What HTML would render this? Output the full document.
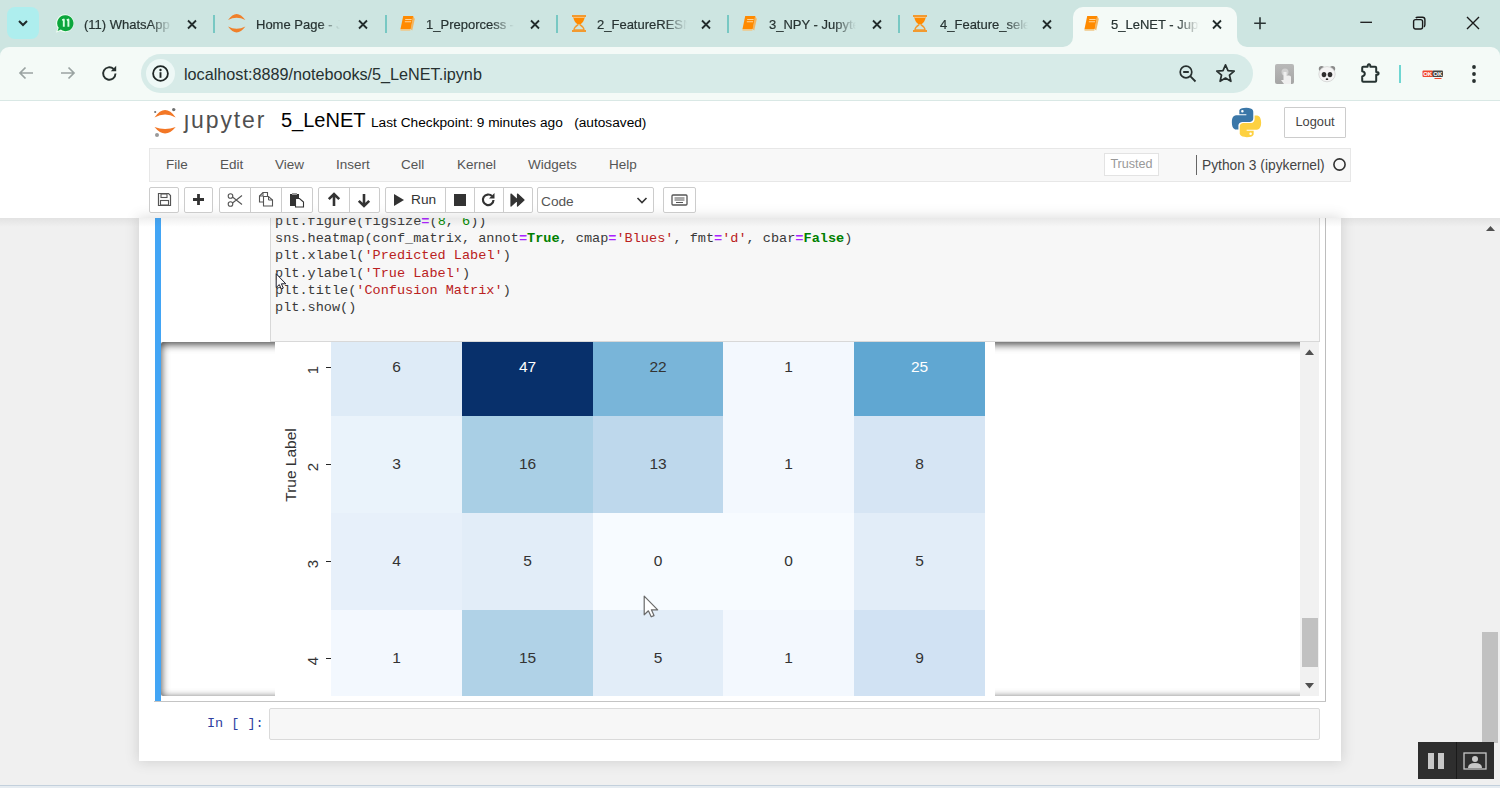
<!DOCTYPE html>
<html><head><meta charset="utf-8">
<style>
*{box-sizing:border-box;margin:0;padding:0}
html,body{width:1500px;height:788px;overflow:hidden;background:#f0f0f0;font-family:"Liberation Sans",sans-serif}
.a{position:absolute}
/* tab strip */
#tabs{left:0;top:0;width:1500px;height:60px;background:#cde5e1}
.tt{font-size:13px;color:#273332;-webkit-text-stroke:0.2px #273332;white-space:nowrap;overflow:hidden;top:16px;height:20px;line-height:18px}
.fade{-webkit-mask-image:linear-gradient(to right,#000 75%,transparent)}
.sep{width:2px;height:18px;top:15px;background:#78c8c3}
.cx{top:17px;width:12px;height:12px}
#toolbar{left:0;top:47px;width:1500px;height:54px;background:#f4faf7;border-bottom:1px solid #d9e8e5;border-radius:9px 9px 0 0}
#omni{left:141px;top:54px;width:1112px;height:39px;border-radius:20px;background:#d7ebe8}
/* jupyter */
#jhead{left:0;top:101px;width:1500px;height:117px;background:#fff}
#menubar{left:149px;top:148px;width:1202px;height:34px;background:#f8f8f8;border:1px solid #e7e7e7;border-radius:0}
.mi{top:156px;font-size:13.5px;color:#555;line-height:17px}
.btn{top:187px;height:26px;background:#fff;border:1px solid #ccc;border-radius:2px}
.bsep{top:187px;width:1px;height:26px;background:#ccc}
#page{left:0;top:218px;width:1500px;height:570px;background:#f0f0f0}
#container{left:139px;top:218px;width:1202px;height:543px;background:#fff;box-shadow:0 0 12px 1px rgba(87,87,87,.2)}
.code{font-family:"Liberation Mono",monospace;font-size:13.55px;line-height:17.35px;color:#3a3a3a;white-space:pre}
.kw{color:#008000;font-weight:bold}
.st{color:#ba2121}
.op{color:#aa22ff;font-weight:bold}
.ytick{width:20px;height:16px;line-height:16px;text-align:center;font-size:15px;color:#333;transform:rotate(-90deg)}
.cell{padding-top:1px;text-align:center;font-family:"Liberation Sans",sans-serif;font-size:15.5px;}
</style></head>
<body>
<div id="tabs" class="a"></div>

<!-- tab search -->
<div class="a" style="left:7px;top:7px;width:32px;height:32px;border-radius:8px;background:#aeeeee"></div>
<svg class="a" style="left:17px;top:18px" width="12" height="10" viewBox="0 0 12 10"><path d="M2 3 L6 7 L10 3" fill="none" stroke="#1f2a2a" stroke-width="2"/></svg>
<!-- tab1 whatsapp -->
<svg class="a" style="left:54px;top:12px" width="22" height="22" viewBox="0 0 22 22"><path d="M11.75 2.3 A8.95 8.95 0 1 1 6.4 18.9 L1.8 20.8 L3.6 16.2 A8.95 8.95 0 0 1 11.75 2.3Z" fill="#eefcf0"/><path d="M11.75 3.35 A7.9 7.9 0 1 1 6.9 17.6 L3.6 18.9 L4.7 15.8 A7.9 7.9 0 0 1 11.75 3.35Z" fill="#0ba63c"/><path d="M8.2 8.2 L9.8 7.6 V14.8 M12.8 8.2 L14.4 7.6 V14.8" fill="none" stroke="#d6ffe0" stroke-width="1.9" stroke-linejoin="round"/></svg>
<div class="a tt fade" style="left:84px;width:88px">(11) WhatsApp</div>
<div class="a sep" style="left:213px"></div>
<!-- tab2 home -->
<svg class="a" style="left:226px;top:12px" width="22" height="22" viewBox="0 0 22 22"><path d="M2 8 Q10.6 -4.2 19.4 8 Q10.6 3.6 2 8Z" fill="#f0802a"/><path d="M2 14.5 Q10.6 26.3 19.4 14.5 Q10.6 18.9 2 14.5Z" fill="#f0802a"/></svg>
<div class="a tt fade" style="left:256px;width:84px">Home Page - Jupyter</div>
<div class="a sep" style="left:385px"></div>
<div class="a tt fade" style="left:426px;width:88px">1_Preporcess - Jupyter</div>
<div class="a sep" style="left:556px"></div>
<div class="a tt fade" style="left:597px;width:90px">2_FeatureRESNET</div>
<div class="a sep" style="left:727px"></div>
<div class="a tt fade" style="left:769px;width:87px">3_NPY - Jupyter</div>
<div class="a sep" style="left:898px"></div>
<div class="a tt fade" style="left:940px;width:88px">4_Feature_selection</div>
<!-- active tab -->
<div class="a" style="left:1073px;top:7px;width:164px;height:40px;background:#f4faf7;border-radius:10px 10px 0 0"></div>
<svg class="a" style="left:1063px;top:37px" width="10" height="10"><path d="M0 10 A10 10 0 0 0 10 0 L10 10Z" fill="#f4faf7"/></svg>
<svg class="a" style="left:1237px;top:37px" width="10" height="10"><path d="M10 10 A10 10 0 0 1 0 0 L0 10Z" fill="#f4faf7"/></svg>
<div class="a tt fade" style="left:1111px;width:88px">5_LeNET - Jupyter</div>
<svg class="a" style="left:399px;top:15px" width="17" height="17" viewBox="0 0 17 17"><path d="M14.2 1 L15.8 4 L13.2 15.5 L11.7 14Z" fill="#f5b560"/><path d="M4.2 1 H14.2 L11.7 14 H1.5Z" fill="#ff8a00"/><path d="M1.5 14 H11.7 L11.3 15.8 H2 Q0.8 15.8 1.5 14Z" fill="#f0c888"/><path d="M6.2 4.5 H12.6 M5.8 6.7 H12.1" stroke="#ffd59a" stroke-width="1.1"/></svg><svg class="a" style="left:572px;top:15px" width="14" height="17" viewBox="0 0 14 17"><rect x="0" y="0" width="14" height="2" fill="#f29a30"/><rect x="0" y="15" width="14" height="2" fill="#f29a30"/><path d="M1.3 2 H12.7 Q12.3 6.5 8.2 9.6 H5.8 Q1.7 6.5 1.3 2Z" fill="#ff8a00"/><path d="M1.3 2 H12.7 V3 H1.3Z" fill="#ffc070"/><path d="M6.2 9.6 Q2.3 12 2 15 H12 Q11.7 12 7.8 9.6" fill="none" stroke="#f29a30" stroke-width="1.5"/></svg><svg class="a" style="left:741px;top:15px" width="17" height="17" viewBox="0 0 17 17"><path d="M14.2 1 L15.8 4 L13.2 15.5 L11.7 14Z" fill="#f5b560"/><path d="M4.2 1 H14.2 L11.7 14 H1.5Z" fill="#ff8a00"/><path d="M1.5 14 H11.7 L11.3 15.8 H2 Q0.8 15.8 1.5 14Z" fill="#f0c888"/><path d="M6.2 4.5 H12.6 M5.8 6.7 H12.1" stroke="#ffd59a" stroke-width="1.1"/></svg><svg class="a" style="left:913px;top:15px" width="14" height="17" viewBox="0 0 14 17"><rect x="0" y="0" width="14" height="2" fill="#f29a30"/><rect x="0" y="15" width="14" height="2" fill="#f29a30"/><path d="M1.3 2 H12.7 Q12.3 6.5 8.2 9.6 H5.8 Q1.7 6.5 1.3 2Z" fill="#ff8a00"/><path d="M1.3 2 H12.7 V3 H1.3Z" fill="#ffc070"/><path d="M6.2 9.6 Q2.3 12 2 15 H12 Q11.7 12 7.8 9.6" fill="none" stroke="#f29a30" stroke-width="1.5"/></svg><svg class="a" style="left:1083px;top:15px" width="17" height="17" viewBox="0 0 17 17"><path d="M14.2 1 L15.8 4 L13.2 15.5 L11.7 14Z" fill="#f5b560"/><path d="M4.2 1 H14.2 L11.7 14 H1.5Z" fill="#ff8a00"/><path d="M1.5 14 H11.7 L11.3 15.8 H2 Q0.8 15.8 1.5 14Z" fill="#f0c888"/><path d="M6.2 4.5 H12.6 M5.8 6.7 H12.1" stroke="#ffd59a" stroke-width="1.1"/></svg><svg class="a cx" style="left:186px;top:18px" width="12" height="12" viewBox="0 0 12 12"><path d="M2 2.5 L10 10.5 M10 2.5 L2 10.5" stroke="#222c2c" stroke-width="1.8"/></svg><svg class="a cx" style="left:357px;top:18px" width="12" height="12" viewBox="0 0 12 12"><path d="M2 2.5 L10 10.5 M10 2.5 L2 10.5" stroke="#222c2c" stroke-width="1.8"/></svg><svg class="a cx" style="left:529px;top:18px" width="12" height="12" viewBox="0 0 12 12"><path d="M2 2.5 L10 10.5 M10 2.5 L2 10.5" stroke="#222c2c" stroke-width="1.8"/></svg><svg class="a cx" style="left:700px;top:18px" width="12" height="12" viewBox="0 0 12 12"><path d="M2 2.5 L10 10.5 M10 2.5 L2 10.5" stroke="#222c2c" stroke-width="1.8"/></svg><svg class="a cx" style="left:871px;top:18px" width="12" height="12" viewBox="0 0 12 12"><path d="M2 2.5 L10 10.5 M10 2.5 L2 10.5" stroke="#222c2c" stroke-width="1.8"/></svg><svg class="a cx" style="left:1041px;top:18px" width="12" height="12" viewBox="0 0 12 12"><path d="M2 2.5 L10 10.5 M10 2.5 L2 10.5" stroke="#222c2c" stroke-width="1.8"/></svg><svg class="a cx" style="left:1211px;top:18px" width="12" height="12" viewBox="0 0 12 12"><path d="M2 2.5 L10 10.5 M10 2.5 L2 10.5" stroke="#222c2c" stroke-width="1.8"/></svg>
<svg class="a" style="left:1253px;top:16px" width="14" height="14" viewBox="0 0 14 14"><path d="M7 1.3 V13.3 M1.2 7.3 H12.8" stroke="#2a3434" stroke-width="1.6"/></svg>
<svg class="a" style="left:1360px;top:20px" width="13" height="5" viewBox="0 0 13 5"><path d="M0.3 2.3 H12" stroke="#1a1a1a" stroke-width="1.3"/></svg>
<svg class="a" style="left:1412px;top:16px" width="15" height="15" viewBox="0 0 15 15"><rect x="1.6" y="3.6" width="9" height="9.4" rx="2" fill="none" stroke="#1a1a1a" stroke-width="1.4"/><path d="M3.8 2 Q4.3 1.3 5.8 1.3 H10.5 Q12.9 1.3 12.9 3.7 V8.6 Q12.9 10.4 12 10.9" fill="none" stroke="#1a1a1a" stroke-width="1.4"/></svg>
<svg class="a" style="left:1466px;top:16px" width="14" height="14" viewBox="0 0 14 14"><path d="M1 1 L13 13 M13 1 L1 13" stroke="#1a1a1a" stroke-width="1.4"/></svg>
<div id="toolbar" class="a"></div>
<div id="omni" class="a"></div>

<svg class="a" style="left:17px;top:64px" width="18" height="18" viewBox="0 0 18 18"><path d="M16 9 H3 M8.5 3.5 L3 9 L8.5 14.5" fill="none" stroke="#9aa3a2" stroke-width="1.7"/></svg>
<svg class="a" style="left:59px;top:64px" width="18" height="18" viewBox="0 0 18 18"><path d="M2 9 H15 M9.5 3.5 L15 9 L9.5 14.5" fill="none" stroke="#9aa3a2" stroke-width="1.7"/></svg>
<svg class="a" style="left:100px;top:64px" width="19" height="19" viewBox="0 0 19 19"><path d="M15.5 9.5 A6.2 6.2 0 1 1 13.6 5" fill="none" stroke="#27302f" stroke-width="1.9"/><path d="M16.2 1.8 V7.2 H10.8Z" fill="#27302f"/></svg>
<div class="a" style="left:146px;top:59px;width:29px;height:29px;border-radius:50%;background:#eef8f6"></div>
<svg class="a" style="left:151px;top:64px" width="19" height="19" viewBox="0 0 19 19"><circle cx="9.5" cy="9.5" r="7.4" fill="none" stroke="#1f2625" stroke-width="1.8"/><circle cx="9.5" cy="6" r="1.2" fill="#1f2625"/><path d="M9.5 8.2 V13.8" stroke="#1f2625" stroke-width="1.9"/></svg>
<div class="a" style="left:184px;top:63.5px;font-size:16.2px;line-height:20px;color:#263130;white-space:nowrap">localhost:8889/notebooks/5_LeNET.ipynb</div>
<svg class="a" style="left:1178px;top:64px" width="20" height="20" viewBox="0 0 20 20"><circle cx="8" cy="8" r="5.8" fill="none" stroke="#27302f" stroke-width="1.7"/><path d="M5.2 8 H10.8 M12.2 12.2 L17.5 17.5" stroke="#27302f" stroke-width="1.8"/></svg>
<svg class="a" style="left:1215px;top:63px" width="21" height="20" viewBox="0 0 21 20"><path d="M10.5 1.8 L13 7.6 L19.2 8.1 L14.5 12.2 L15.9 18.3 L10.5 15.1 L5.1 18.3 L6.5 12.2 L1.8 8.1 L8 7.6Z" fill="none" stroke="#27302f" stroke-width="1.7" stroke-linejoin="round"/></svg>
<div class="a" style="left:1275px;top:64px;width:19px;height:20px;border-radius:2px;background:linear-gradient(#b9b9b9,#a5a5a5)"></div>
<svg class="a" style="left:1277px;top:66px" width="16" height="18" viewBox="0 0 16 18"><circle cx="8" cy="6" r="3.5" fill="#d0d0d0"/><path d="M6.5 6 V14 H4 L7 18 H14 V11 Q14 9.5 12 9.5 H9.5 V6Z" fill="#efefef"/></svg>
<svg class="a" style="left:1317px;top:64px" width="20" height="19" viewBox="0 0 20 19"><circle cx="4.6" cy="4.8" r="2.8" fill="#8a8a8a"/><circle cx="15.4" cy="4.8" r="2.8" fill="#8a8a8a"/><ellipse cx="10" cy="10.2" rx="8.2" ry="7.6" fill="#f4f4f4" stroke="#c8c8c8" stroke-width=".6"/><ellipse cx="7" cy="10.6" rx="2.3" ry="2.7" fill="#2e2e2e"/><ellipse cx="13" cy="10.6" rx="2.3" ry="2.7" fill="#2e2e2e"/><ellipse cx="10" cy="15.2" rx="1.3" ry=".9" fill="#2e2e2e"/></svg>
<svg class="a" style="left:1359px;top:61px" width="24" height="24" viewBox="0 0 24 24"><path d="M4.5 5.8 H8.6 Q8.6 3.2 10 3.2 Q11.4 3.2 11.4 5.8 H16.2 Q17.2 5.8 17.2 6.8 V11 Q19.6 11 19.6 12.4 Q19.6 13.8 17.2 13.8 V19.8 Q17.2 20.8 16.2 20.8 H4.2 Q3.2 20.8 3.2 19.8 V15.5 Q5.8 14.8 5.8 12.8 Q5.8 10.8 3.2 10.2 V6.8 Q3.2 5.8 4.2 5.8Z" fill="none" stroke="#263332" stroke-width="2" stroke-linejoin="round"/></svg>
<div class="a" style="left:1399px;top:65px;width:2px;height:18px;background:#6fd6d2"></div>
<svg class="a" style="left:1421px;top:68px" width="24" height="12" viewBox="0 0 24 12"><rect x="1.5" y="2.5" width="10.5" height="6.5" rx="1" fill="#f0482e"/><rect x="11.5" y="2.5" width="10.5" height="6.5" rx="1" fill="#454545"/><text x="6.7" y="8.2" font-family="Liberation Sans" font-weight="bold" font-size="6" fill="#fff" text-anchor="middle">OK</text><text x="16.8" y="8.2" font-family="Liberation Sans" font-weight="bold" font-size="6" fill="#fff" text-anchor="middle">OK</text><rect x="13.5" y="10" width="7" height="1" fill="#f0482e"/></svg>
<svg class="a" style="left:1470px;top:64px" width="8" height="20" viewBox="0 0 8 20"><circle cx="4" cy="3" r="1.9" fill="#27302f"/><circle cx="4" cy="10" r="1.9" fill="#27302f"/><circle cx="4" cy="17" r="1.9" fill="#27302f"/></svg>
<div id="jhead" class="a"></div>

<!-- jupyter logo -->
<svg class="a" style="left:152px;top:106px" width="28" height="33" viewBox="0 0 28 33"><path d="M2.5 11.4 Q13.1 -3.4 23.7 11.4 Q13.1 5.4 2.5 11.4Z" fill="#f37726"/><path d="M2.5 21 Q13.1 34 23.7 21 Q13.1 25.2 2.5 21Z" fill="#f37726"/><circle cx="21.7" cy="3.6" r="1.7" fill="#6f6f6f"/><circle cx="3.2" cy="6" r="1.1" fill="#6f6f6f"/><circle cx="5" cy="29" r="2" fill="#9a9a9a"/></svg>
<div class="a" style="left:184px;top:107px;font-size:23px;line-height:26px;color:#505050;letter-spacing:1.9px">&#x0237;upyter</div>
<div class="a" style="left:281px;top:108px;font-size:20px;line-height:24px;color:#000">5_LeNET</div>
<div class="a" style="left:371px;top:115px;font-size:13.7px;line-height:16px;color:#000;white-space:pre">Last Checkpoint: 9 minutes ago   (autosaved)</div>
<svg class="a" style="left:1231px;top:107px" width="31" height="31" viewBox="0 0 110 110"><path d="M54 3C28 3 29.6 14.3 29.6 14.3V26H54.5V29.5H19.7S3 27.6 3 54.1 17.6 80 17.6 80H26.3V67.6S25.8 53 40.6 53H65.2S79 53.2 79 39.7V17.3S81.1 3 54 3ZM40.4 10.8A4.5 4.5 0 1 1 40.4 19.8 4.5 4.5 0 1 1 40.4 10.8Z" fill="#3b77a8"/><path d="M56 107C82 107 80.4 95.7 80.4 95.7V84H55.5V80.5H90.3S107 82.4 107 55.9 92.4 30 92.4 30H83.7V42.4S84.2 57 69.4 57H44.8S31 56.8 31 70.3V92.7S28.9 107 56 107ZM69.6 99.2A4.5 4.5 0 1 1 69.6 90.2 4.5 4.5 0 1 1 69.6 99.2Z" fill="#fdd141"/></svg>
<div class="a" style="left:1284px;top:107px;width:62px;height:31px;border:1px solid #ccc;border-radius:1px;background:#fff;font-size:12.8px;line-height:28px;text-align:center;color:#444">Logout</div>
<div id="page" class="a"></div>
<div id="container" class="a"></div>
<div class="a" style="left:154.5px;top:218px;width:6.5px;height:484px;background:#42a5f5"></div>
<div class="a" style="left:270px;top:218px;width:1050px;height:124px;background:#f7f7f7;border:1px solid #d8d8d8;border-top:none"></div>
<div class="a code" style="left:275px;top:212.5px;clip-path:inset(5.5px 0 0 0)">plt.figure(figsize<span class="op">=</span>(<span style="color:#080">8</span>, <span style="color:#080">6</span>))
sns.heatmap(conf_matrix, annot<span class="op">=</span><span class="kw">True</span>, cmap<span class="op">=</span><span class="st">'Blues'</span>, fmt<span class="op">=</span><span class="st">'d'</span>, cbar<span class="op">=</span><span class="kw">False</span>)
plt.xlabel(<span class="st">'Predicted Label'</span>)
plt.ylabel(<span class="st">'True Label'</span>)
plt.title(<span class="st">'Confusion Matrix'</span>)
plt.show()</div>

<div id="menubar" class="a"></div>
<div class="a mi" style="left:166px">File</div>
<div class="a mi" style="left:220px">Edit</div>
<div class="a mi" style="left:275px">View</div>
<div class="a mi" style="left:336px">Insert</div>
<div class="a mi" style="left:401px">Cell</div>
<div class="a mi" style="left:457px">Kernel</div>
<div class="a mi" style="left:528px">Widgets</div>
<div class="a mi" style="left:609px">Help</div>
<div class="a" style="left:1104px;top:153px;width:55px;height:23px;border:1px solid #e3e3e3;background:#fff;font-size:12.6px;line-height:21px;text-align:center;color:#999">Trusted</div>
<div class="a" style="left:1196px;top:155px;width:1px;height:20px;background:#666"></div>
<div class="a mi" style="left:1202px;color:#444;font-size:13.8px;top:156.5px">Python 3 (ipykernel)</div>
<svg class="a" style="left:1332px;top:157px" width="15" height="15" viewBox="0 0 15 15"><circle cx="7.5" cy="7.5" r="5.6" fill="none" stroke="#333" stroke-width="1.6"/></svg>


<div class="a btn" style="left:149px;width:30px"></div>
<div class="a btn" style="left:184px;width:29px"></div>
<div class="a btn" style="left:219px;width:94px"></div>
<div class="a bsep" style="left:250px"></div><div class="a bsep" style="left:281px"></div>
<div class="a btn" style="left:318px;width:62px"></div>
<div class="a bsep" style="left:349px"></div>
<div class="a btn" style="left:385px;width:148px"></div>
<div class="a bsep" style="left:445px"></div><div class="a bsep" style="left:474px"></div><div class="a bsep" style="left:503px"></div>
<div class="a btn" style="left:537px;width:117px"></div>
<div class="a" style="left:541px;top:194px;font-size:13.7px;line-height:16px;color:#555">Code</div>
<svg class="a" style="left:636px;top:196px" width="12" height="9" viewBox="0 0 12 9"><path d="M1.5 2 L6 6.5 L10.5 2" fill="none" stroke="#333" stroke-width="1.6"/></svg>
<div class="a btn" style="left:663px;width:33px"></div>
<svg class="a" style="left:671px;top:193px" width="17" height="14" viewBox="0 0 17 14"><rect x="1" y="2" width="15" height="10" rx="1" fill="none" stroke="#555" stroke-width="1.3"/><path d="M3.5 5 H13.5 M3.5 7 H13.5 M5 9.5 H12" stroke="#555" stroke-width="1"/></svg>
<!-- save -->
<svg class="a" style="left:157px;top:192px" width="15" height="15" viewBox="0 0 15 15"><path d="M1.5 1.5 H11.5 L13.5 3.5 V13.5 H1.5Z" fill="none" stroke="#555" stroke-width="1.2"/><rect x="4" y="2" width="6" height="3.5" fill="none" stroke="#555" stroke-width="1.1"/><rect x="3.5" y="8.5" width="8" height="4.5" fill="none" stroke="#555" stroke-width="1.1"/></svg>
<!-- plus -->
<svg class="a" style="left:192px;top:193px" width="13" height="13" viewBox="0 0 13 13"><path d="M6.5 1 V12 M1 6.5 H12" stroke="#333" stroke-width="2.8"/></svg>
<!-- scissors -->
<svg class="a" style="left:227px;top:192px" width="16" height="16" viewBox="0 0 16 16"><circle cx="3.5" cy="4" r="2.3" fill="none" stroke="#555" stroke-width="1.1"/><circle cx="3.5" cy="12" r="2.3" fill="none" stroke="#555" stroke-width="1.1"/><path d="M5.5 5 L15 12.5 M5.5 11 L15 3.5" stroke="#555" stroke-width="1.1"/></svg>
<!-- copy -->
<svg class="a" style="left:258px;top:191px" width="16" height="16" viewBox="0 0 16 16"><path d="M5 11 H1.5 V5 L5 1.5 H9.5 V5" fill="none" stroke="#555" stroke-width="1.1"/><path d="M1.5 5 H5 V1.5" fill="none" stroke="#555" stroke-width="1"/><path d="M5.5 5.5 H10.5 L14.5 9 V15 H5.5Z" fill="#fff" stroke="#555" stroke-width="1.1"/><path d="M10.5 5.5 V9 H14.5" fill="none" stroke="#555" stroke-width="1"/></svg>
<!-- paste -->
<svg class="a" style="left:289px;top:192px" width="16" height="16" viewBox="0 0 16 16"><path d="M1 2 H10 V6 H6 V14 H1Z" fill="#333"/><path d="M3 1 H8 V3 H3Z" fill="#999"/><path d="M6.5 6.5 H10.5 L14.5 10 V15 H6.5Z" fill="#fff" stroke="#333" stroke-width="1.1"/></svg>
<!-- up/down -->
<svg class="a" style="left:327px;top:192px" width="14" height="15" viewBox="0 0 14 15"><path d="M7 2 V14 M1.8 7.2 L7 2 L12.2 7.2" fill="none" stroke="#333" stroke-width="2.6"/></svg>
<svg class="a" style="left:357px;top:193px" width="14" height="15" viewBox="0 0 14 15"><path d="M7 1 V13 M1.8 7.8 L7 13 L12.2 7.8" fill="none" stroke="#333" stroke-width="2.6"/></svg>
<!-- run -->
<svg class="a" style="left:393px;top:193px" width="12" height="14" viewBox="0 0 12 14"><path d="M1 1 L11 7 L1 13Z" fill="#333"/></svg>
<div class="a" style="left:411px;top:191.5px;font-size:13.7px;line-height:16px;color:#333">Run</div>
<div class="a" style="left:454px;top:193.5px;width:12px;height:12px;background:#333"></div>
<svg class="a" style="left:481px;top:192px" width="15" height="15" viewBox="0 0 15 15"><path d="M12.5 8 A5.3 5.3 0 1 1 11 4.1" fill="none" stroke="#333" stroke-width="2.2"/><path d="M13.5 1 V6.5 H8Z" fill="#333"/></svg>
<svg class="a" style="left:510px;top:193px" width="16" height="14" viewBox="0 0 16 14"><path d="M1 1 L7.5 7 L1 13Z M7.5 1 L14 7 L7.5 13Z" fill="#333" stroke="#333" stroke-width="1.2" stroke-linejoin="round"/></svg>

<!-- output scroll -->
<div class="a" style="left:161px;top:342px;width:1158px;height:354px;border-radius:2px;box-shadow:inset 0 2px 8px rgba(0,0,0,.8);background:#fff"></div>
<div class="a" style="left:275px;top:342px;width:720px;height:354px;background:#fff;overflow:hidden">
<div class="a cell" style="left:56px;top:-23px;width:131px;height:97px;background:#deebf7;color:#333;line-height:94px">6</div>
<div class="a cell" style="left:187px;top:-23px;width:131px;height:97px;background:#08306b;color:#ffffff;line-height:94px">47</div>
<div class="a cell" style="left:318px;top:-23px;width:130px;height:97px;background:#79b5d9;color:#333;line-height:94px">22</div>
<div class="a cell" style="left:448px;top:-23px;width:131px;height:97px;background:#f3f8fe;color:#333;line-height:94px">1</div>
<div class="a cell" style="left:579px;top:-23px;width:131px;height:97px;background:#60a7d2;color:#ffffff;line-height:94px">25</div>
<div class="a cell" style="left:56px;top:74px;width:131px;height:97px;background:#eaf3fb;color:#333;line-height:94px">3</div>
<div class="a cell" style="left:187px;top:74px;width:131px;height:97px;background:#a9cfe5;color:#333;line-height:94px">16</div>
<div class="a cell" style="left:318px;top:74px;width:130px;height:97px;background:#bed8ec;color:#333;line-height:94px">13</div>
<div class="a cell" style="left:448px;top:74px;width:131px;height:97px;background:#f3f8fe;color:#333;line-height:94px">1</div>
<div class="a cell" style="left:579px;top:74px;width:131px;height:97px;background:#d6e5f4;color:#333;line-height:94px">8</div>
<div class="a cell" style="left:56px;top:171px;width:131px;height:97px;background:#e7f0fa;color:#333;line-height:94px">4</div>
<div class="a cell" style="left:187px;top:171px;width:131px;height:97px;background:#e2edf8;color:#333;line-height:94px">5</div>
<div class="a cell" style="left:318px;top:171px;width:130px;height:97px;background:#f7fbff;color:#333;line-height:94px">0</div>
<div class="a cell" style="left:448px;top:171px;width:131px;height:97px;background:#f7fbff;color:#333;line-height:94px">0</div>
<div class="a cell" style="left:579px;top:171px;width:131px;height:97px;background:#e2edf8;color:#333;line-height:94px">5</div>
<div class="a cell" style="left:56px;top:268px;width:131px;height:97px;background:#f3f8fe;color:#333;line-height:94px">1</div>
<div class="a cell" style="left:187px;top:268px;width:131px;height:97px;background:#b0d2e7;color:#333;line-height:94px">15</div>
<div class="a cell" style="left:318px;top:268px;width:130px;height:97px;background:#e2edf8;color:#333;line-height:94px">5</div>
<div class="a cell" style="left:448px;top:268px;width:131px;height:97px;background:#f3f8fe;color:#333;line-height:94px">1</div>
<div class="a cell" style="left:579px;top:268px;width:131px;height:97px;background:#d1e2f3;color:#333;line-height:94px">9</div>
<div class="a" style="left:51px;top:24.9px;width:5px;height:1px;background:#262626"></div>
<div class="a ytick" style="left:28px;top:19.9px">1</div>
<div class="a" style="left:51px;top:122.0px;width:5px;height:1px;background:#262626"></div>
<div class="a ytick" style="left:28px;top:117.0px">2</div>
<div class="a" style="left:51px;top:218.8px;width:5px;height:1px;background:#262626"></div>
<div class="a ytick" style="left:28px;top:213.7px">3</div>
<div class="a" style="left:51px;top:315.8px;width:5px;height:1px;background:#262626"></div>
<div class="a ytick" style="left:28px;top:310.7px">4</div>

<div class="a" style="left:-24px;top:115px;width:80px;height:16px;transform:rotate(-90deg);font-size:15.5px;letter-spacing:0;line-height:16px;color:#333;text-align:center;white-space:nowrap">True Label</div>
</div>
<div class="a" style="left:1300px;top:342px;width:19px;height:354px;background:#f1f1f1"></div>
<svg class="a" style="left:1304px;top:348px" width="11" height="8" viewBox="0 0 11 8"><path d="M1 7 L5.5 1.5 L10 7Z" fill="#505050"/></svg>
<svg class="a" style="left:1304px;top:682px" width="11" height="8" viewBox="0 0 11 8"><path d="M1 1 L5.5 6.5 L10 1Z" fill="#505050"/></svg>
<div class="a" style="left:1302px;top:618px;width:16px;height:49px;background:#c1c1c1"></div>
<!-- cell border -->
<div class="a" style="left:1325px;top:218px;width:1px;height:484px;background:#bdbdbd"></div>
<div class="a" style="left:154px;top:701px;width:1172px;height:1px;background:#c4c4c4"></div>
<!-- In [ ] -->
<div class="a code" style="left:207px;top:715px;color:#303f9f;font-size:13.5px">In [ ]:</div>
<div class="a" style="left:269px;top:708px;width:1051px;height:32px;background:#f7f7f7;border:1px solid #dadada;border-radius:2px"></div>


<svg class="a" style="left:275px;top:273px" width="14" height="20" viewBox="0 0 14 20"><path d="M1.2 0.8 V14.5 L4.3 11.6 L6.3 16 L8.3 15.1 L6.4 10.8 H10.8Z" fill="#fafafa" stroke="#1c1c2a" stroke-width="1" stroke-linejoin="round"/></svg>
<svg class="a" style="left:643px;top:595px" width="17" height="24" viewBox="0 0 17 24"><path d="M1.2 1.2 V19.8 L5.4 15.8 L8.2 21.8 L11 20.6 L8.4 14.8 H14.7Z" fill="#fff" stroke="#6a6a6a" stroke-width="1.2" stroke-linejoin="round"/></svg>
<!-- header shadow -->
<div class="a" style="left:0;top:218px;width:1500px;height:9px;background:linear-gradient(rgba(87,87,87,.09),rgba(87,87,87,0))"></div>
<!-- page scrollbar -->
<svg class="a" style="left:1485px;top:225px" width="11" height="7" viewBox="0 0 11 7"><path d="M1 6 L5.5 1 L10 6Z" fill="#505050"/></svg>
<div class="a" style="left:1482px;top:632px;width:16px;height:111px;background:#c1c1c1"></div>
<!-- video controls -->
<div class="a" style="left:1418px;top:742px;width:76px;height:37px;background:#2e2e2e"></div>
<div class="a" style="left:1456px;top:742px;width:1px;height:37px;background:#1a1a1a"></div>
<div class="a" style="left:1428px;top:753px;width:6px;height:16px;background:#c8c8c8"></div>
<div class="a" style="left:1438px;top:753px;width:6px;height:16px;background:#c8c8c8"></div>
<svg class="a" style="left:1463px;top:752px" width="24" height="18" viewBox="0 0 24 18"><rect x="1" y="1" width="22" height="16" fill="none" stroke="#c8c8c8" stroke-width="1.3"/><circle cx="12" cy="7" r="3" fill="#c8c8c8"/><path d="M5 16 Q5 11 12 11 Q19 11 19 16Z" fill="#c8c8c8"/></svg>
<div class="a" style="left:0;top:785px;width:1500px;height:3px;background:linear-gradient(#c3d0dc 0,#c3d0dc 1px,#e6ecf1 1px)"></div>
</body></html>
